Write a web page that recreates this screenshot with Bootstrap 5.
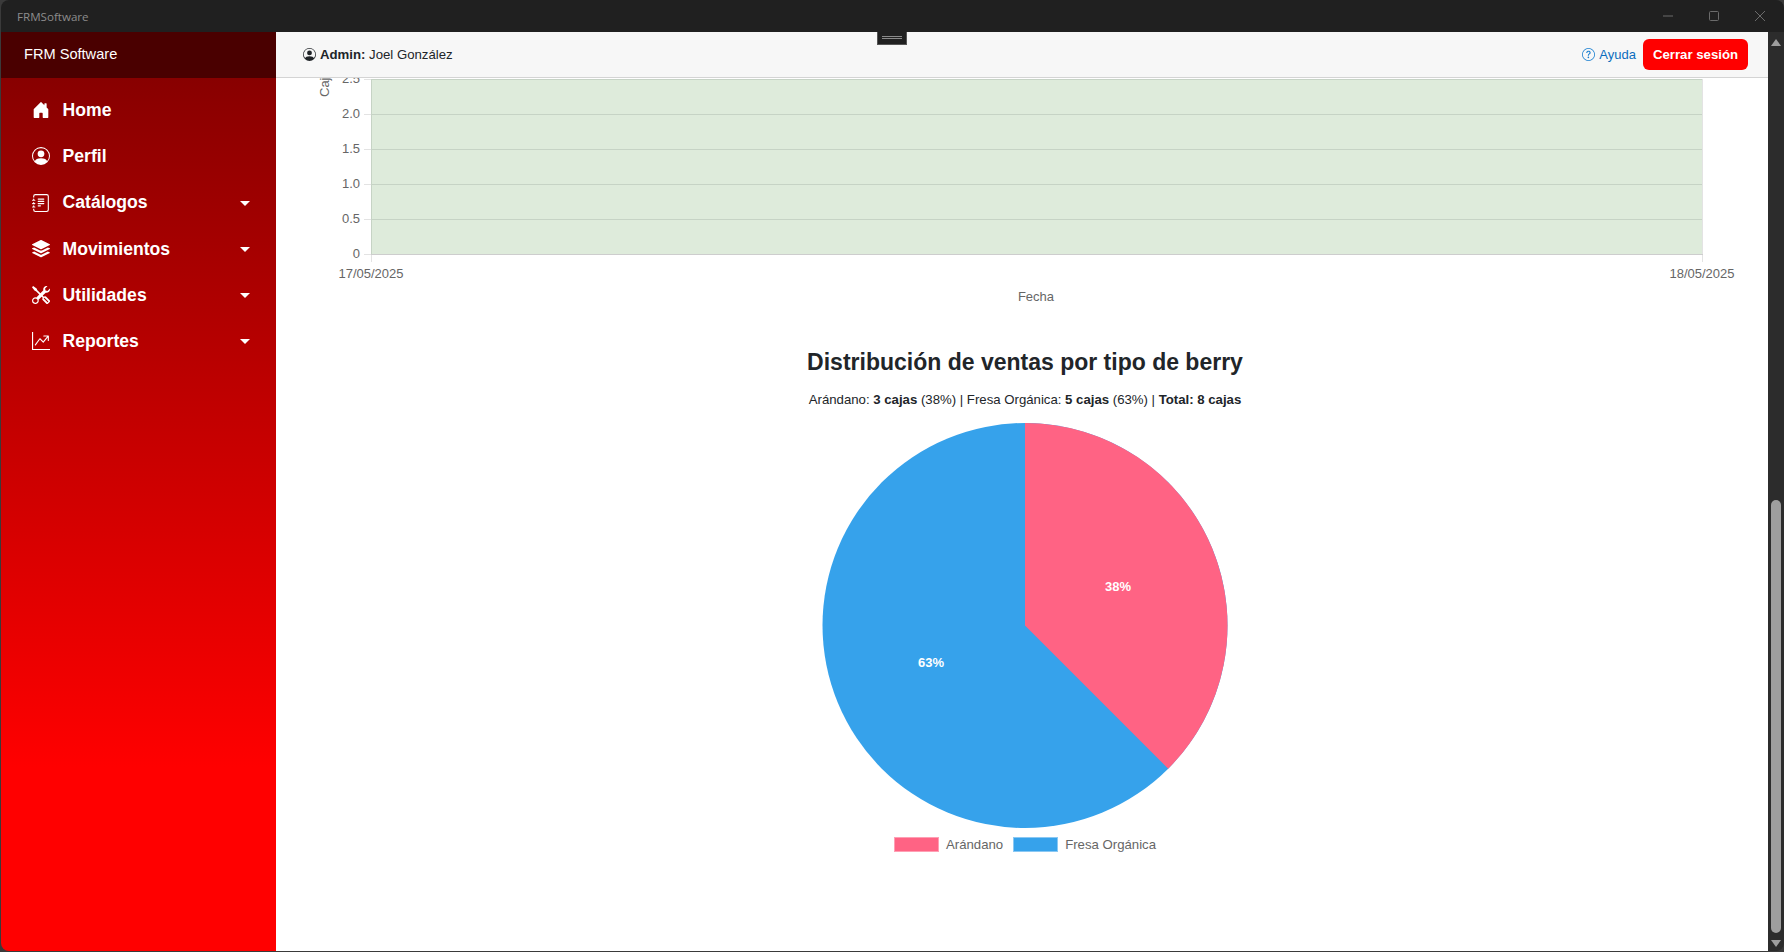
<!DOCTYPE html>
<html lang="es">
<head>
<meta charset="utf-8">
<title>FRMSoftware</title>
<link href="https://cdn.jsdelivr.net/npm/bootstrap@5.3.0/dist/css/bootstrap.min.css" rel="stylesheet">
<style>
html,body{height:100%;overflow:hidden}
body{background:#3a3a3a;font-family:"Liberation Sans",Arial,sans-serif;color:#212529;font-size:13.2px}
.app-window{height:951px;border-radius:8px;overflow:hidden;margin-left:1px;position:relative}
.title-strip{height:32px;background:#202020;color:#8c8c8c;font-size:11.6px;padding:2px 19px 0 16px;font-family:"Open Sans","Liberation Sans",sans-serif}
.win-ctrls{gap:36px;color:#6b6b6b;margin-top:-2px}
.win-ctrls svg{display:block;width:10px;height:10px}
.grabber{position:absolute;left:876px;top:32px;width:30px;height:13px;background:#202020;border:1px solid #555;border-top:0;display:flex;flex-direction:column;align-items:center;justify-content:center;gap:1px;padding-bottom:1px}
.grabber i{display:block;width:20px;height:1px;background:#8a8a8a}
.main-row{height:919px}
.side-col{width:275px;flex:none;background:linear-gradient(180deg,#880000 46px,#ff0000 735px)}
.side-brand{height:46px;background:#4a0000;color:#fff;font-size:14.6px;padding-left:23px}
.side-nav{padding-top:9px}
.side-nav .nav-link{color:#fff;font-weight:700;font-size:17.6px;line-height:26.2px;padding:10px 26px 10px 31px;gap:12.6px}
.side-nav .nav-link svg{width:18px;height:18px;flex:none;fill:currentColor}
.side-nav .dropdown-toggle::after{margin-left:auto;vertical-align:0;margin-top:1px}
.content-col{min-width:0}
.top-head{height:46px;background:#f7f7f7;border-bottom:1px solid #d4d4d4;padding:0 20px 0 27px}
.top-head svg{width:13px;height:13px;fill:currentColor;flex:none}
.help-link{color:#0b6dbe;text-decoration:none;gap:4px;font-size:13px}
.help-link svg{fill:#1a7fd0}
.exit-btn{background:#f00;border:0;color:#fff;font-weight:700;font-size:13.2px;padding:0;width:105px;height:31px;border-radius:6px;margin-left:7px}
.exit-btn:hover{background:#f00;color:#fff}
.sheet{background:#fff;overflow:hidden}
.sheet svg{display:block}
.line-chart{width:1492px;height:230px}
.line-chart text{font-family:"Liberation Sans",Arial,sans-serif;font-size:13px;fill:#666}
.pie-block{padding-left:6px}
.pie-title{font-size:23px;font-weight:700;line-height:29px;margin:40px 0 12px}
.pie-sub{font-size:13.2px;line-height:21px;margin:0 0 10px}
.pie-svg{width:412px;height:412px;margin:0 auto}
.pie-svg text{font-family:"Liberation Sans",Arial,sans-serif;font-size:13px;font-weight:700;fill:#fff;text-anchor:middle}
.pie-legend{margin-top:5px;gap:10px;color:#666;font-size:13.2px;line-height:15px}
.swatch{display:block;width:45px;height:15px;border:1px solid;margin-right:7px}
.swatch-a{background:#ff6384;border-color:#ff9fb4}
.swatch-b{background:#36a2eb;border-color:#8ac8f3}
.bar-track{width:16px;flex:none;background:#2c2c2c;padding:6px 3px 4px}
.bar-track svg{display:block;width:10px;height:9px;fill:#9e9e9e}
.bar-thumb{height:433px;width:10px;background:#9e9e9e;border-radius:5px;margin-top:auto;margin-bottom:5px}
</style>
</head>
<body>
<div class="app-window d-flex flex-column">
  <div class="title-strip d-flex align-items-center justify-content-between">
    <span>FRMSoftware</span>
    <div class="win-ctrls d-flex align-items-center">
      <svg viewBox="0 0 10 10"><path d="M0 5h10" stroke="currentColor" fill="none"/></svg>
      <svg viewBox="0 0 10 10"><rect x=".5" y=".5" width="9" height="9" rx="1" stroke="currentColor" fill="none"/></svg>
      <svg viewBox="0 0 10 10"><path d="M0 0l10 10M10 0L0 10" stroke="currentColor" fill="none"/></svg>
    </div>
  </div>
  <div class="grabber"><i></i><i></i></div>
  <div class="main-row d-flex">
    <aside class="side-col d-flex flex-column">
      <div class="side-brand d-flex align-items-center">FRM Software</div>
      <nav class="side-nav nav flex-column">
        <a class="nav-link d-flex align-items-center" href="#"><svg viewBox="0 0 16 16"><path d="M6.5 14.5v-3.505c0-.245.25-.495.5-.495h2c.25 0 .5.25.5.5v3.5a.5.5 0 0 0 .5.5h4a.5.5 0 0 0 .5-.5v-7a.5.5 0 0 0-.146-.354L13 5.793V2.5a.5.5 0 0 0-.5-.5h-1a.5.5 0 0 0-.5.5v1.293L8.354 1.146a.5.5 0 0 0-.708 0l-6 6A.5.5 0 0 0 1.5 7.5v7a.5.5 0 0 0 .5.5h4a.5.5 0 0 0 .5-.5Z"/></svg>Home</a>
        <a class="nav-link d-flex align-items-center" href="#"><svg viewBox="0 0 16 16"><path d="M11 6a3 3 0 1 1-6 0 3 3 0 0 1 6 0z"/><path fill-rule="evenodd" d="M0 8a8 8 0 1 1 16 0A8 8 0 0 1 0 8zm8-7a7 7 0 0 0-5.468 11.37C3.242 11.226 4.805 10 8 10s4.757 1.225 5.468 2.37A7 7 0 0 0 8 1z"/></svg>Perfil</a>
        <a class="nav-link dropdown-toggle d-flex align-items-center" href="#"><svg viewBox="0 0 16 16"><path d="M5 10.5a.5.5 0 0 1 .5-.5h2a.5.5 0 0 1 0 1h-2a.5.5 0 0 1-.5-.5zm0-2a.5.5 0 0 1 .5-.5h5a.5.5 0 0 1 0 1h-5a.5.5 0 0 1-.5-.5zm0-2a.5.5 0 0 1 .5-.5h5a.5.5 0 0 1 0 1h-5a.5.5 0 0 1-.5-.5zm0-2a.5.5 0 0 1 .5-.5h5a.5.5 0 0 1 0 1h-5a.5.5 0 0 1-.5-.5z"/><path d="M3 0h10a2 2 0 0 1 2 2v12a2 2 0 0 1-2 2H3a2 2 0 0 1-2-2v-1h1v1a1 1 0 0 0 1 1h10a1 1 0 0 0 1-1V2a1 1 0 0 0-1-1H3a1 1 0 0 0-1 1v1H1V2a2 2 0 0 1 2-2z"/><path d="M1 5v-.5a.5.5 0 0 1 1 0V5h.5a.5.5 0 0 1 0 1h-2a.5.5 0 0 1 0-1H1zm0 3v-.5a.5.5 0 0 1 1 0V8h.5a.5.5 0 0 1 0 1h-2a.5.5 0 0 1 0-1H1zm0 3v-.5a.5.5 0 0 1 1 0v.5h.5a.5.5 0 0 1 0 1h-2a.5.5 0 0 1 0-1H1z"/></svg>Catálogos</a>
        <a class="nav-link dropdown-toggle d-flex align-items-center" href="#"><svg viewBox="0 0 16 16"><path d="m14.12 10.163 1.715.858c.22.11.22.424 0 .534L8.267 15.34a.598.598 0 0 1-.534 0L.165 11.555a.299.299 0 0 1 0-.534l1.716-.858 5.317 2.659c.505.252 1.1.252 1.604 0l5.317-2.66zM7.733.063a.598.598 0 0 1 .534 0l7.568 3.784a.3.3 0 0 1 0 .535L8.267 8.165a.598.598 0 0 1-.534 0L.165 4.382a.299.299 0 0 1 0-.535L7.733.063z"/><path d="m14.12 6.576 1.715.858c.22.11.22.424 0 .534l-7.568 3.784a.598.598 0 0 1-.534 0L.165 7.968a.299.299 0 0 1 0-.534l1.716-.858 5.317 2.659c.505.252 1.1.252 1.604 0l5.317-2.659z"/></svg>Movimientos</a>
        <a class="nav-link dropdown-toggle d-flex align-items-center" href="#"><svg viewBox="0 0 16 16"><path d="M1 0 0 1l2.2 3.081a1 1 0 0 0 .815.419h.07a1 1 0 0 1 .708.293l2.675 2.675-2.617 2.654A3.003 3.003 0 0 0 0 13a3 3 0 1 0 5.878-.851l2.654-2.617.968.968-.305.914a1 1 0 0 0 .242 1.023l3.27 3.27a.997.997 0 0 0 1.414 0l1.586-1.586a.997.997 0 0 0 0-1.414l-3.27-3.27a1 1 0 0 0-1.023-.242L10.5 9.5l-.96-.96 2.68-2.643A3.005 3.005 0 0 0 16 3c0-.269-.035-.53-.102-.777l-2.14 2.141L12 4l-.364-1.757L13.777.102a3 3 0 0 0-3.675 3.68L7.462 6.46 4.793 3.793a1 1 0 0 1-.293-.707v-.071a1 1 0 0 0-.419-.814L1 0Zm9.646 10.646a.5.5 0 0 1 .708 0l2.914 2.915a.5.5 0 0 1-.707.707l-2.915-2.914a.5.5 0 0 1 0-.708ZM3 11l.471.242.529.026.287.445.445.287.026.529L5 13l-.242.471-.026.529-.445.287-.287.445-.529.026L3 15l-.471-.242L2 14.732l-.287-.445L1.268 14l-.026-.529L1 13l.242-.471.026-.529.445-.287.287-.445.529-.026L3 11Z"/></svg>Utilidades</a>
        <a class="nav-link dropdown-toggle d-flex align-items-center" href="#"><svg viewBox="0 0 16 16"><path fill-rule="evenodd" d="M0 0h1v15h15v1H0V0Zm10 3.5a.5.5 0 0 1 .5-.5h4a.5.5 0 0 1 .5.5v4a.5.5 0 0 1-1 0V4.9l-3.613 4.417a.5.5 0 0 1-.74.037L7.06 6.767l-3.656 5.027a.5.5 0 0 1-.808-.588l4-5.5a.5.5 0 0 1 .758-.06l2.609 2.61L13.445 4H10.5a.5.5 0 0 1-.5-.5Z"/></svg>Reportes</a>
      </nav>
    </aside>
    <div class="content-col flex-grow-1 d-flex flex-column">
      <header class="top-head d-flex align-items-center">
        <svg class="me-1" viewBox="0 0 16 16"><path d="M11 6a3 3 0 1 1-6 0 3 3 0 0 1 6 0z"/><path fill-rule="evenodd" d="M0 8a8 8 0 1 1 16 0A8 8 0 0 1 0 8zm8-7a7 7 0 0 0-5.468 11.37C3.242 11.226 4.805 10 8 10s4.757 1.225 5.468 2.37A7 7 0 0 0 8 1z"/></svg>
        <span><strong>Admin:</strong> Joel González</span>
        <a class="help-link d-flex align-items-center ms-auto" href="#"><svg viewBox="0 0 16 16"><path d="M8 15A7 7 0 1 1 8 1a7 7 0 0 1 0 14zm0 1A8 8 0 1 0 8 0a8 8 0 0 0 0 16z"/><path d="M5.255 5.786a.237.237 0 0 0 .241.247h.825c.138 0 .248-.113.266-.25.09-.656.54-1.134 1.342-1.134.686 0 1.314.343 1.314 1.168 0 .635-.374.927-.965 1.371-.673.489-1.206 1.06-1.168 1.987l.003.217a.25.25 0 0 0 .25.246h.811a.25.25 0 0 0 .25-.25v-.105c0-.718.273-.927 1.01-1.486.609-.463 1.244-.977 1.244-2.056 0-1.511-1.276-2.241-2.673-2.241-1.267 0-2.655.59-2.75 2.286zm1.557 5.763c0 .533.425.927 1.01.927.609 0 1.028-.394 1.028-.927 0-.552-.42-.94-1.029-.94-.584 0-1.009.388-1.009.94z"/></svg>Ayuda</a>
        <button class="btn exit-btn" type="button">Cerrar sesión</button>
      </header>
      <main class="sheet flex-grow-1">
        <svg class="line-chart" viewBox="276 78 1492 230">
          <rect x="371" y="79" width="1331" height="175" fill="#deebdb"/>
          <g stroke="#c6d3c5" stroke-width="1" shape-rendering="crispEdges">
            <path d="M371 79.5H1702M371 114.5H1702M371 149.5H1702M371 184.5H1702M371 219.5H1702"/>
            <path d="M371.5 79V254"/>
          </g>
          <g stroke="#e3e3e3" stroke-width="1" shape-rendering="crispEdges">
            <path d="M364 79.5H371M364 114.5H371M364 149.5H371M364 184.5H371M364 219.5H371M364 254.5H371"/>
            <path d="M371.5 255V262M1702.5 79V262"/>
          </g>
          <path d="M371 254.5H1703" stroke="#cdcdcd" shape-rendering="crispEdges"/>
          <g text-anchor="end">
            <text x="360" y="83">2.5</text>
            <text x="360" y="118">2.0</text>
            <text x="360" y="153">1.5</text>
            <text x="360" y="188">1.0</text>
            <text x="360" y="223">0.5</text>
            <text x="360" y="258">0</text>
          </g>
          <text text-anchor="middle" x="371" y="278">17/05/2025</text>
          <text text-anchor="middle" x="1702" y="278">18/05/2025</text>
          <text text-anchor="middle" x="1036" y="301">Fecha</text>
          <text transform="translate(329 97) rotate(-90)">Cajas</text>
        </svg>
        <section class="pie-block text-center">
          <h3 class="pie-title">Distribución de ventas por tipo de berry</h3>
          <p class="pie-sub">Arándano: <strong>3 cajas</strong> (38%) | Fresa Orgánica: <strong>5 cajas</strong> (63%) | <strong>Total: 8 cajas</strong></p>
          <svg class="pie-svg" viewBox="0 0 412 412">
            <circle cx="206" cy="205.5" r="202.5" fill="#36a2eb"/>
            <path d="M206 205.5V3A202.5 202.5 0 0 1 349.2 348.7Z" fill="#ff6384"/>
            <text x="299" y="171">38%</text>
            <text x="112" y="247">63%</text>
          </svg>
          <div class="pie-legend d-flex justify-content-center align-items-center">
            <span class="d-flex align-items-center"><i class="swatch swatch-a"></i>Arándano</span>
            <span class="d-flex align-items-center"><i class="swatch swatch-b"></i>Fresa Orgánica</span>
          </div>
        </section>
      </main>
    </div>
    <div class="bar-track d-flex flex-column">
      <svg viewBox="0 0 10 9"><path d="M5 1l5 7H0z"/></svg>
      <div class="bar-thumb"></div>
      <svg viewBox="0 0 10 9"><path d="M5 9L0 2h10z"/></svg>
    </div>
  </div>
</div>
<script src="https://cdn.jsdelivr.net/npm/bootstrap@5.3.0/dist/js/bootstrap.bundle.min.js"></script>
</body>
</html>
